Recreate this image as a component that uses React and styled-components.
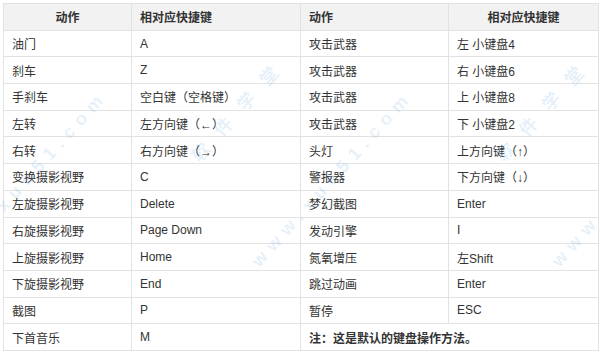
import React from "react";
import styled, { createGlobalStyle } from "styled-components";

const GlobalStyle = createGlobalStyle`
  html, body {
    margin: 0;
    padding: 0;
    background: #fff;
  }
  body {
    font-family: "Liberation Sans", "Noto Sans CJK SC", sans-serif;
    font-size: 12px;
    color: #333;
  }
`;

const Page = styled.div`
  position: relative;
  width: 600px;
  height: 354px;
  padding: 3px 0 0 3px;
  box-sizing: border-box;
  overflow: hidden;
`;

const Table = styled.table`
  width: 595px;
  border-collapse: collapse;
  table-layout: fixed;
`;

const Row = styled.tr`
  height: 26.7px;
`;

const Head = styled.th`
  background: #f2f2f2;
  border: 1px solid #e2e2e2;
  padding: 0 8px;
  font-weight: bold;
  color: #333;
  text-align: ${(p) => (p.$center ? "center" : "left")};
  white-space: nowrap;
`;

const Cell = styled.td`
  border: 1px solid #e2e2e2;
  padding: 0 8px;
  color: #333;
  font-weight: ${(p) => (p.$bold ? "bold" : "normal")};
  white-space: nowrap;
`;

const Mark = styled.div`
  position: absolute;
  pointer-events: none;
  transform-origin: 0 50%;
  transform: rotate(-48deg);
  white-space: nowrap;
  color: rgba(90, 160, 225, 0.16);
  font-family: "Liberation Sans", "Noto Sans CJK SC", sans-serif;
  font-weight: bold;
  font-size: ${(p) => p.$size}px;
  letter-spacing: ${(p) => p.$spacing}px;
  line-height: 1;
`;

const rows = [
  ["油门", "A", "攻击武器", "左 小键盘4"],
  ["刹车", "Z", "攻击武器", "右 小键盘6"],
  ["手刹车", "空白键（空格键）", "攻击武器", "上 小键盘8"],
  ["左转", "左方向键（←）", "攻击武器", "下 小键盘2"],
  ["右转", "右方向键（→）", "头灯", "上方向键（↑）"],
  ["变换摄影视野", "C", "警报器", "下方向键（↓）"],
  ["左旋摄影视野", "Delete", "梦幻截图", "Enter"],
  ["右旋摄影视野", "Page Down", "发动引擎", "I"],
  ["上旋摄影视野", "Home", "氮氧增压", "左Shift"],
  ["下旋摄影视野", "End", "跳过动画", "Enter"],
  ["截图", "P", "暂停", "ESC"],
];

const marks = [-50, 255, 555];

export default function App() {
  return (
    <>
      <GlobalStyle />
      <Page>
        <Table>
          <colgroup>
            <col style={{ width: 128 }} />
            <col style={{ width: 169 }} />
            <col style={{ width: 148 }} />
            <col style={{ width: 150 }} />
          </colgroup>
          <thead>
            <Row>
              <Head $center>动作</Head>
              <Head>相对应快捷键</Head>
              <Head>动作</Head>
              <Head $center>相对应快捷键</Head>
            </Row>
          </thead>
          <tbody>
            {rows.map((r, i) => (
              <Row key={i}>
                {r.map((c, j) => (
                  <Cell key={j}>{c}</Cell>
                ))}
              </Row>
            ))}
            <Row>
              <Cell>下首音乐</Cell>
              <Cell>M</Cell>
              <Cell colSpan={2} $bold>
                注：这是默认的键盘操作方法。
              </Cell>
            </Row>
          </tbody>
        </Table>
        {marks.map((x) => (
          <React.Fragment key={x}>
            <Mark $size={18} $spacing={7} style={{ left: x, top: 255 }}>
              www.xue51.com
            </Mark>
            <Mark $size={18} $spacing={16} style={{ left: x + 245, top: 150 }}>
              软件学堂
            </Mark>
          </React.Fragment>
        ))}
      </Page>
    </>
  );
}
